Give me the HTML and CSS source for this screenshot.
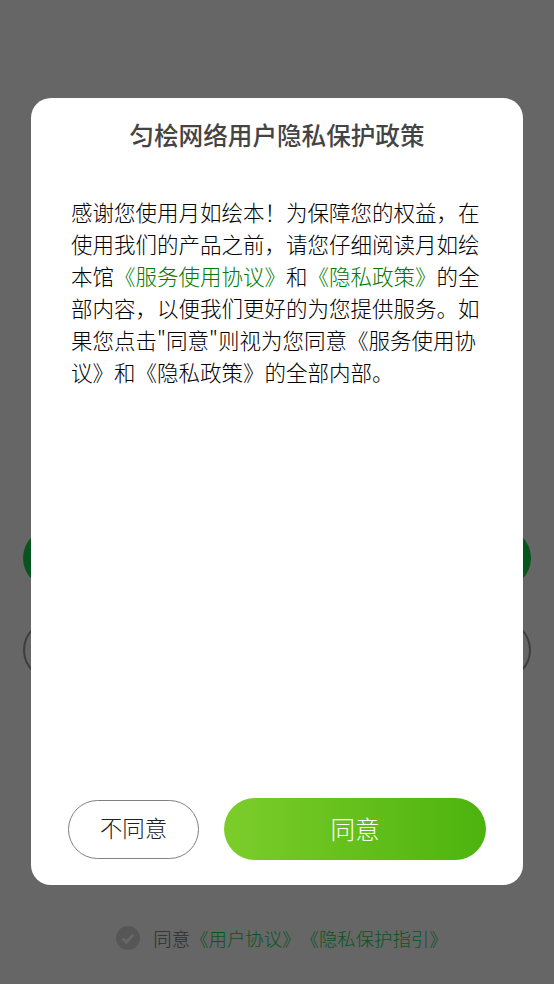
FILE: index.html
```html
<!DOCTYPE html>
<html lang="zh-CN">
<head>
<meta charset="utf-8">
<title>隐私保护政策</title>
<link rel="stylesheet" href="styles.css">
</head>
<body>
<main class="page">
  <div class="actions">
    <button class="btn-primary" type="button"></button>
    <button class="btn-outline" type="button"></button>
  </div>
  <div class="consent">
    <svg class="check" viewBox="0 0 24 24" width="24" height="24" aria-hidden="true">
      <circle cx="12" cy="12" r="12" fill="#d6d6d6"></circle>
      <path d="M6.5 12.5l3.8 3.6 7.2-7.6" fill="none" stroke="#fff" stroke-width="3"></path>
    </svg>
    <span>同意<a class="consent-link">《用户协议》《隐私保护指引》</a></span>
  </div>
</main>
<div class="overlay">
  <section class="modal">
    <h1 class="modal-title">匀桧网络用户隐私保护政策</h1>
    <p class="modal-text">感谢您使用月如绘本！为保障您的权益，在使用我们的产品之前，请您仔细阅读月如绘本馆<a class="link">《服务使用协议》</a>和<a class="link">《隐私政策》</a>的全部内容，以便我们更好的为您提供服务。如果您点击"同意"则视为您同意《服务使用协议》和《隐私政策》的全部内部。</p>
    <div class="modal-actions">
      <button class="btn-decline" type="button">不同意</button>
      <button class="btn-accept" type="button">同意</button>
    </div>
  </section>
</div>
</body>
</html>
```
FILE: styles.css
```css
* { box-sizing: border-box; }
html, body { margin: 0; height: 100%; }
body {
  font-family: "Noto Sans CJK SC", "Liberation Sans", sans-serif;
  font-weight: 300;
  font-kerning: none;
  text-spacing-trim: space-all;
  background: #fff;
  overflow: hidden;
}
.page {
  height: 984px;
  display: flex;
  flex-direction: column;
  padding: 528px 23px 0;
}
.actions { display: flex; flex-direction: column; gap: 32px; }
.btn-primary, .btn-outline {
  display: block;
  width: 100%;
  height: 60px;
  border-radius: 30px;
  padding: 0;
}
.btn-primary { border: 0; background: #14d24f; }
.btn-outline { border: 2px solid #999; background: #fff; }
.consent {
  margin-top: 246px;
  padding-left: 10px;
  display: flex;
  align-items: center;
  justify-content: center;
  gap: 13px;
  font-size: 18.4px;
  font-weight: 300;
  line-height: 24px;
  color: #707070;
}
.consent-link { color: #14d24f; }
.check { flex: none; }
.overlay {
  position: fixed;
  inset: 0;
  background: rgba(0, 0, 0, 0.6);
}
.modal {
  position: absolute;
  left: 31px;
  top: 98px;
  width: 492px;
  height: 787px;
  background: #fff;
  border-radius: 20px;
  display: flex;
  flex-direction: column;
  padding: 18px 37px 25px;
}
.modal-title {
  margin: 0;
  font-size: 24.6px;
  line-height: 36px;
  font-weight: 500;
  color: #444;
  text-align: center;
}
.modal-text {
  margin: 44px 0 0;
  padding: 0 3px;
  font-size: 21.5px;
  line-height: 32px;
  color: #000;
}
.link { color: #007a00; }
.modal-actions {
  margin-top: auto;
  display: flex;
  align-items: center;
  gap: 25px;
}
.btn-decline {
  flex: none;
  width: 131px;
  height: 59px;
  border: 1px solid #808080;
  border-radius: 30px;
  background: #fff;
  color: #222;
  font: inherit;
  font-size: 22.4px;
  padding: 0 0 4px;
}
.btn-accept {
  flex: none;
  width: 262px;
  height: 62px;
  border: 0;
  border-radius: 31px;
  background: linear-gradient(90deg, #7ccd2a, #4db30e);
  color: #fff;
  font: inherit;
  font-size: 24.6px;
  padding: 0 0 2px;
}
```
